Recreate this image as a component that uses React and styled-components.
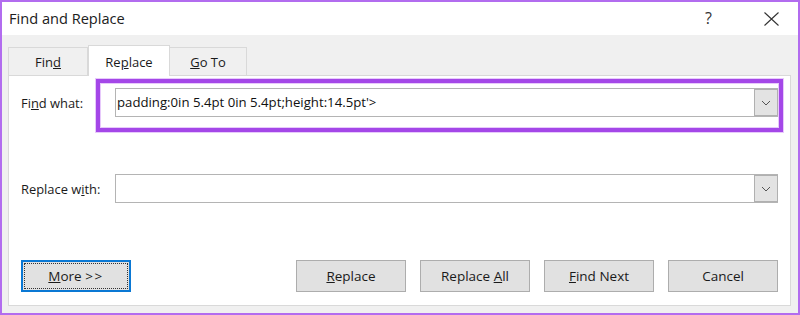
import React from "react";
import styled, { createGlobalStyle } from "styled-components";

const Global = createGlobalStyle`
  html, body { margin: 0; padding: 0; background: #ffffff; }
  body { font-family: "Open Sans", "Noto Sans", sans-serif; color: #1a1a1a; }
  * { box-sizing: border-box; }
`;

const Window = styled.div`
  width: 800px;
  height: 315px;
  border: 2px solid #b26cef;
  background: #f0f0f0;
  display: flex;
  flex-direction: column;
`;

const TitleBar = styled.div`
  height: 33px;
  flex: none;
  background: #ffffff;
  display: flex;
  align-items: center;
  padding-left: 7px;
`;

const Title = styled.div`
  font-size: 14.6px;
  color: #202020;
  flex: 1;
  margin-top: -1px;
`;

const Help = styled.div`
  font-size: 16px;
  color: #333;
  width: 10px;
  margin-right: 48px;
  margin-top: -2px;
`;

const CloseBtn = styled.div`
  width: 16px;
  height: 16px;
  margin-right: 19px;
  display: flex;
  align-items: center;
  justify-content: center;
`;

const Body = styled.div`
  flex: 1;
  display: flex;
  flex-direction: column;
  padding: 10px 7px 7px 6px;
`;

const Tabs = styled.div`
  display: flex;
  align-items: flex-end;
  height: 30px;
  flex: none;
`;

const Tab = styled.div`
  width: ${(p) => p.$w}px;
  height: ${(p) => (p.$active ? 31 : 28)}px;
  margin-bottom: ${(p) => (p.$active ? -1 : 0)}px;
  background: ${(p) => (p.$active ? "#ffffff" : "#f0f0f0")};
  border: 1px solid #d9d9d9;
  border-bottom: none;
  ${(p) => (p.$active ? "" : "margin-left: -1px;")}
  position: relative;
  z-index: ${(p) => (p.$active ? 2 : 1)};
  display: flex;
  justify-content: center;
  align-items: flex-end;
  padding-bottom: ${(p) => (p.$active ? 5 : 4)}px;
  font-size: 13px;
  line-height: 18px;
  color: #1a1a1a;
  &:first-child { margin-left: 0; }
`;

const Panel = styled.div`
  flex: 1;
  background: #ffffff;
  border: 1px solid #d9d9d9;
  position: relative;
  display: flex;
  flex-direction: column;
  padding: 12px 12px 13px 12px;
`;

const Row = styled.div`
  display: flex;
  align-items: center;
  margin-bottom: ${(p) => p.$mb || 0}px;
`;

const Label = styled.div`
  width: 94px;
  flex: none;
  font-size: 12.9px;
  color: #1a1a1a;
  margin-top: 1px;
`;

const Combo = styled.div`
  flex: 1;
  height: 29px;
  border: 1px solid #b4b4b4;
  display: flex;
  align-items: center;
  padding-left: 1px;
`;

const ComboText = styled.div`
  flex: 1;
  font-size: 13.2px;
  color: #111;
  white-space: nowrap;
  margin-top: -1px;
`;

const DropBtn = styled.div`
  width: 24px;
  height: 27px;
  border: 1px solid #b0b0b0;
  background: #e3e3e3;
  margin-right: -1px;
  display: flex;
  align-items: center;
  justify-content: center;
`;

const Highlight = styled.div`
  position: absolute;
  left: 87px;
  top: 3px;
  width: 687px;
  height: 53px;
  border: 4px solid #a447e8;
  box-shadow: inset 0 0 0 1px #e7c9fb, 0 0 0 1px #e7c9fb;
  pointer-events: none;
`;

const ButtonRow = styled.div`
  margin-top: auto;
  display: flex;
  gap: 14px;
`;

const Button = styled.div`
  width: 110px;
  height: 32px;
  border: ${(p) => (p.$focus ? "2px solid #0a78d4" : "1px solid #adadad")};
  background: #e1e1e1;
  display: flex;
  align-items: center;
  justify-content: center;
  font-size: 13.5px;
  color: #1a1a1a;
  padding: ${(p) => (p.$focus ? "1px" : "0")};
  ${(p) => (p.$push ? "margin-left: auto;" : "")}
`;

const FocusRing = styled.div`
  width: 100%;
  height: 100%;
  border: 1px dotted #333;
  display: flex;
  align-items: center;
  justify-content: center;
`;

const Arrows = styled.span`
  letter-spacing: 1.5px;
`;

const Chevron = () => (
  <svg width="10" height="6" viewBox="0 0 10 6">
    <path d="M1 1 L5 5 L9 1" fill="none" stroke="#555" strokeWidth="1" />
  </svg>
);

export default function App() {
  return (
    <>
      <Global />
      <Window>
        <TitleBar>
          <Title>Find and Replace</Title>
          <Help>?</Help>
          <CloseBtn>
            <svg width="15" height="14" viewBox="0 0 15 14">
              <path d="M0.5 0.5 L14.5 13.5 M14.5 0.5 L0.5 13.5" stroke="#333" strokeWidth="1.1" fill="none" />
            </svg>
          </CloseBtn>
        </TitleBar>
        <Body>
          <Tabs>
            <Tab $w={80}><span>Fin<u>d</u></span></Tab>
            <Tab $w={82} $active><span>Re<u>p</u>lace</span></Tab>
            <Tab $w={78}><span><u>G</u>o To</span></Tab>
          </Tabs>
          <Panel>
            <Row $mb={57}>
              <Label>Fi<u>n</u>d what:</Label>
              <Combo>
                <ComboText>padding:0in 5.4pt 0in 5.4pt;height:14.5pt'&gt;</ComboText>
                <DropBtn><Chevron /></DropBtn>
              </Combo>
            </Row>
            <Row>
              <Label>Replace w<u>i</u>th:</Label>
              <Combo>
                <ComboText />
                <DropBtn><Chevron /></DropBtn>
              </Combo>
            </Row>
            <ButtonRow>
              <Button $focus>
                <FocusRing><span><u>M</u>ore <Arrows>&gt;&gt;</Arrows></span></FocusRing>
              </Button>
              <Button $push><span><u>R</u>eplace</span></Button>
              <Button><span>Replace <u>A</u>ll</span></Button>
              <Button><span><u>F</u>ind Next</span></Button>
              <Button><span>Cancel</span></Button>
            </ButtonRow>
            <Highlight />
          </Panel>
        </Body>
      </Window>
    </>
  );
}
